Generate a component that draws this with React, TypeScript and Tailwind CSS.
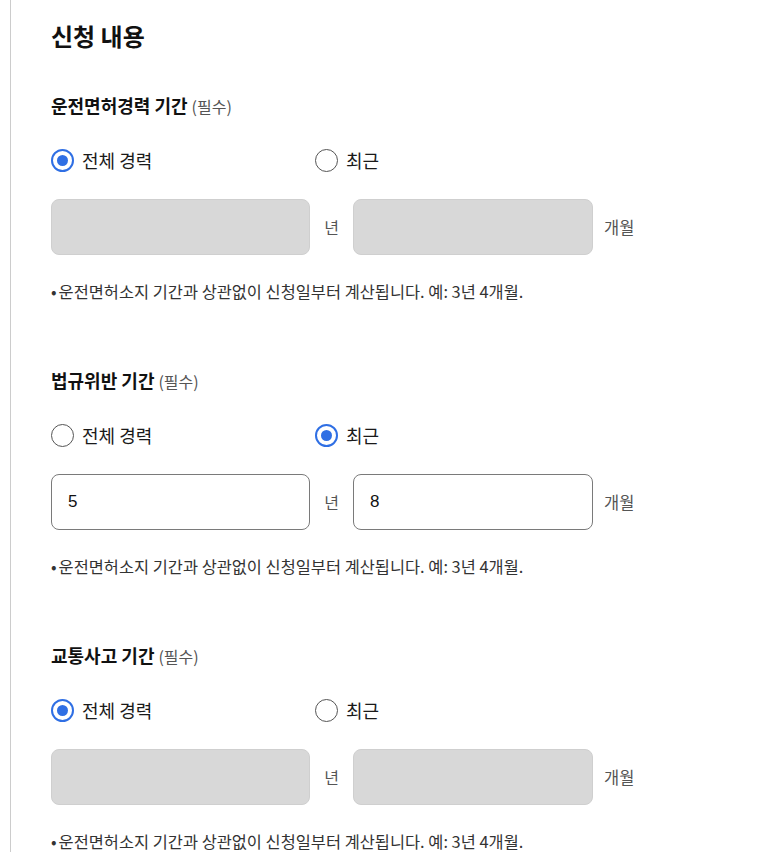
import { useState } from "react";

type Mode = "all" | "recent";

type Section = {
  title: string;
  mode: Mode;
  years: string;
  months: string;
};

const SECTIONS: Section[] = [
  { title: "운전면허경력 기간", mode: "all", years: "", months: "" },
  { title: "법규위반 기간", mode: "recent", years: "5", months: "8" },
  { title: "교통사고 기간", mode: "all", years: "", months: "" },
];

function Radio({ checked, label, onClick }: { checked: boolean; label: string; onClick: () => void }) {
  return (
    <button type="button" onClick={onClick} className="flex h-[24px] items-center gap-2 text-left">
      <span
        className={`flex h-[23px] w-[23px] items-center justify-center rounded-full ${
          checked ? "border-2 border-[#2f6fe4]" : "border-[1.5px] border-[#555]"
        }`}
      >
        {checked && <span className="h-[11px] w-[11px] rounded-full bg-[#2f6fe4]" />}
      </span>
      <span className="text-[18px] leading-[24px] text-[#1a1a1a]">{label}</span>
    </button>
  );
}

function PeriodBlock({ section }: { section: Section }) {
  const [mode, setMode] = useState<Mode>(section.mode);
  const disabled = mode === "all";
  const inputCls = disabled
    ? "bg-[#d8d8d8] border-[#cfcfcf]"
    : "bg-white border-[#7a7a7a]";

  return (
    <section className="pb-[66px]">
      <h2 className="flex h-[24px] items-baseline gap-1 text-[18px] font-bold leading-[24px] text-[#111]">
        {section.title}
        <span className="text-[16px] font-normal text-[#555]">(필수)</span>
      </h2>

      <div className="mt-[31px] flex">
        <div className="w-[264px]">
          <Radio checked={mode === "all"} label="전체 경력" onClick={() => setMode("all")} />
        </div>
        <Radio checked={mode === "recent"} label="최근" onClick={() => setMode("recent")} />
      </div>

      <div className="mt-[27px] flex items-center">
        <div
          className={`flex h-[56px] w-[259px] items-center rounded-lg border px-[16px] text-[17px] text-[#111] ${inputCls}`}
          style={{ fontFamily: "'Liberation Sans', Arial, sans-serif" }}
        >
          {disabled ? "" : section.years}
        </div>
        <span className="w-[43px] text-center text-[16px] text-[#555]">년</span>
        <div
          className={`flex h-[56px] w-[240px] items-center rounded-lg border px-[16px] text-[17px] text-[#111] ${inputCls}`}
          style={{ fontFamily: "'Liberation Sans', Arial, sans-serif" }}
        >
          {disabled ? "" : section.months}
        </div>
        <span className="ml-[11px] text-[16.5px] text-[#555]">개월</span>
      </div>

      <p className="mt-[25px] flex text-[16.4px] leading-[22px] text-[#333]">
        <span className="mr-[2px]">•</span>
        운전면허소지 기간과 상관없이 신청일부터 계산됩니다. 예: 3년 4개월.
      </p>
    </section>
  );
}

export default function App() {
  return (
    <div
      className="min-h-screen bg-white"
      style={{ fontFamily: "'Noto Sans CJK KR', 'Noto Sans', sans-serif" }}
    >
      <div className="ml-[10px] border-l border-[#cccccc] pl-[40px] pt-[18px]">
        <h1 className="text-[24px] font-bold text-[#111]">신청 내용</h1>
        <div className="mt-[39px]">
          {SECTIONS.map((s) => (
            <PeriodBlock key={s.title} section={s} />
          ))}
        </div>
      </div>
    </div>
  );
}
